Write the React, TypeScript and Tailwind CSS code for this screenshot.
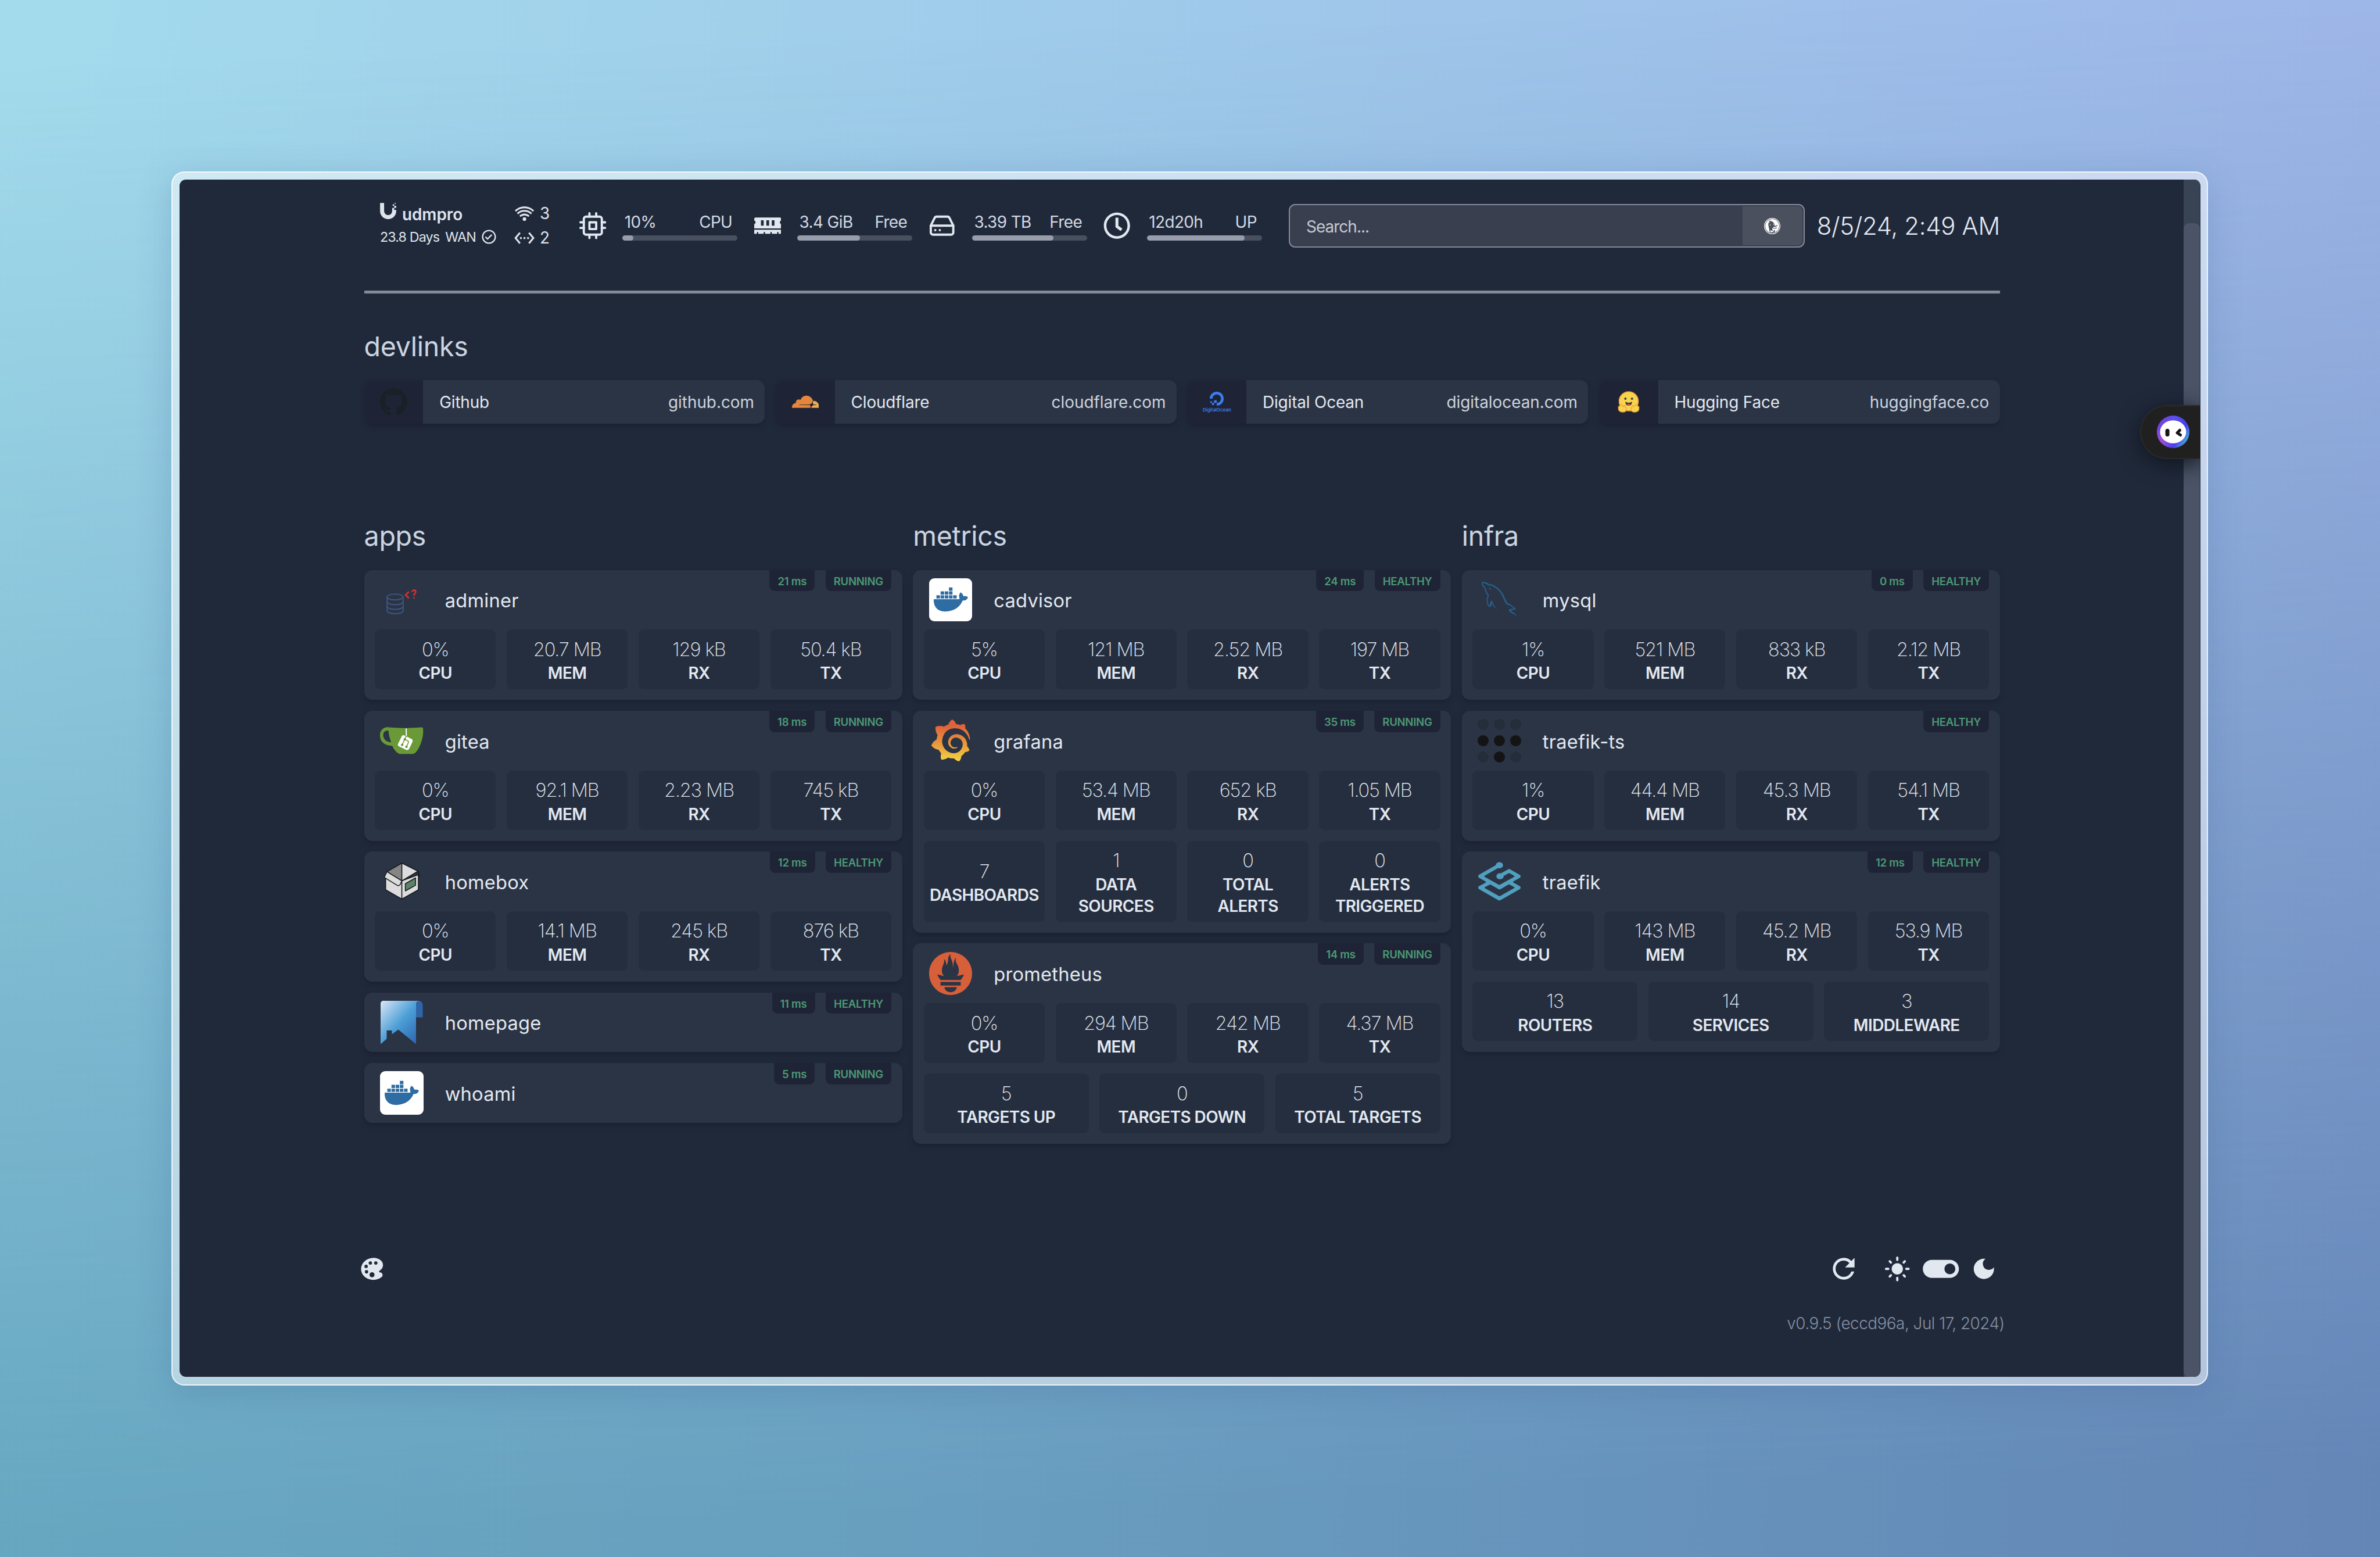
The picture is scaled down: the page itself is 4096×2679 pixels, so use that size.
import type { ReactNode } from "react";
import { FiCpu, FiHardDrive } from "react-icons/fi";
import { FaDocker, FaMemory, FaRegClock } from "react-icons/fa";
import { BiCheckCircle, BiWifi } from "react-icons/bi";
import { GrMysql } from "react-icons/gr";
import { IoColorPalette } from "react-icons/io5";
import { MdDarkMode, MdLightMode, MdRefresh, MdSettingsEthernet, MdToggleOn } from "react-icons/md";
import {
  SiCloudflare,
  SiDigitalocean,
  SiDuckduckgo,
  SiGitea,
  SiGithub,
  SiGrafana,
  SiPrometheus,
  SiTraefikproxy,
  SiUbiquiti,
} from "react-icons/si";

type Stat = [value: string, label: string];
type Service = { name: string; icon: ReactNode; ping?: string; status: string; rows: Stat[][] };

/* ---------- logos ---------- */

function AdminerLogo() {
  return (
    <svg viewBox="0 0 74.5 74.5" className="size-full" fill="none" strokeLinecap="round">
      <g stroke="#3e5580" strokeWidth="2">
        <ellipse cx="26" cy="32.2" rx="13.8" ry="5" />
        <path d="M12.2 32.2v23.6c0 2.9 6 5.2 13.8 5.2s13.8-2.3 13.8-5.2V32.2" />
        <path d="M12.2 40.5c0 2.8 6 5 13.8 5s13.8-2.2 13.8-5M12.2 48.5c0 2.8 6 5 13.8 5s13.8-2.2 13.8-5" />
      </g>
      <g stroke="#d92f2b" strokeWidth="2.6">
        <path d="M49 23.8l-5 4.9 5 5" />
        <path d="M55.5 22.3c.8-2.4 6-2.4 6 1 0 2.7-3 2.7-3 6M58.500 33.800v.2" />
      </g>
    </svg>
  );
}

function GiteaLogo() {
  return (
    <svg viewBox="0 0 24 24" className="size-full">
      <circle cx="13.7" cy="12.9" r="4.6" fill="#fff" />
      <rect x="12.6" y="5.2" width="2.4" height="5" fill="#fff" />
      <SiGitea size={24} color="#6a9a38" />
    </svg>
  );
}

function HomeboxLogo() {
  return (
    <svg viewBox="0 0 74.5 74.5" className="size-full" stroke="#16181c" strokeWidth="1.5" strokeLinejoin="round">
      <path d="M9.7 26v26l27.9 15.8V36.6z" fill="#dcdcdc" />
      <path d="M66 26v26L37.6 67.8V36.6z" fill="#dcdcdc" />
      <path d="M37.6 6L12 20.8l25.6 15.8z" fill="#858585" />
      <path d="M37.6 6l27.8 14L37.6 36.6z" fill="#dcdcdc" />
      <path d="M12 20.8L7.3 30.7l22 13.5c2 1.200 4 .8 5.200-1l3.100-6.600z" fill="#dcdcdc" />
      <path d="M65.4 20l2.6 8.500-2 1.500" fill="none" />
      <path d="M43.6 41.5l17.600-10v12.600L43.600 54z" fill="#5c8268" />
    </svg>
  );
}

function HomepageLogo() {
  return (
    <svg viewBox="0 0 74.5 74.5" className="size-full">
      <defs>
        <linearGradient id="ribbon" x1="0" y1="0" x2="1" y2="1">
          <stop offset="0" stopColor="#dbe6f7" />
          <stop offset=".5" stopColor="#4c9fd6" />
          <stop offset="1" stopColor="#2a5fae" />
        </linearGradient>
      </defs>
      <path d="M66 0c4.500 0 7.500 3 7.500 8v20.500H62V6z" fill="#2f66a8" />
      <path d="M6 0h62c-4 .5-6 3-6 8v66.500L31.500 49.400l-10.900 8.200V51h-9.100v14.600L1 74.500V5c0-3 2-5 5-5z" fill="url(#ribbon)" />
    </svg>
  );
}

function DockerLogo() {
  return (
    <div className="flex size-full items-center justify-center rounded-[9px] bg-white">
      <FaDocker size={59} color="#2e6ca4" />
    </div>
  );
}

function GrafanaLogo() {
  return (
    <>
      <svg className="absolute size-0">
        <defs>
          <linearGradient id="flame" x1="0" y1="0" x2="0" y2="1">
            <stop offset=".15" stopColor="#e0623a" />
            <stop offset=".6" stopColor="#e89a3c" />
            <stop offset="1" stopColor="#f4d443" />
          </linearGradient>
        </defs>
      </svg>
      <SiGrafana size={72} fill="url(#flame)" />
    </>
  );
}

function CloudflareLogo() {
  return (
    <>
      <svg className="absolute size-0">
        <defs>
          <linearGradient id="cloud" x1="0" y1="0" x2="1" y2="0">
            <stop offset=".72" stopColor="#e5863c" />
            <stop offset=".76" stopColor="#ecac52" />
          </linearGradient>
        </defs>
      </svg>
      <SiCloudflare size={46.5} fill="url(#cloud)" />
    </>
  );
}

function TailscaleLogo() {
  const dots = [0, 0, 0, 1, 1, 1, 0, 1, 0];
  return (
    <div className="grid size-full grid-cols-3 content-between justify-items-center gap-x-[9px]">
      {dots.map((on, i) => (
        <span key={i} className={on ? "size-[19px] rounded-full bg-[#141415]" : "size-[19px] rounded-full bg-[#252d3b]"} />
      ))}
    </div>
  );
}

function DigitalOceanLogo() {
  return (
    <div className="flex flex-col items-center gap-[3px] text-[#3b7cf0]">
      <SiDigitalocean size={24} />
      <span className="text-[8px] leading-[9px] font-semibold tracking-[-0.1px]">DigitalOcean</span>
    </div>
  );
}

function HuggingFaceLogo() {
  return (
    <svg viewBox="0 0 40 37" width="40" height="37">
      <circle cx="20" cy="17.5" r="16.5" fill="#f8d44c" stroke="#f0a23a" strokeWidth="1.5" />
      <circle cx="14.3" cy="13" r="2" fill="#3a3b45" />
      <circle cx="25.7" cy="13" r="2" fill="#3a3b45" />
      <path d="M14.500 18c3.500 2.500 7.500 2.500 11 0 .5 4.500-2 7-5.500 7s-6-2.500-5.500-7z" fill="#3a3b45" />
      <path d="M17 23.300c1.500-1.600 4.500-1.600 6 0-1.600 2-4.400 2-6 0z" fill="#ef4e4e" />
      <path
        d="M2.500 29c-1-2.500 1-4 2.500-2.500-1-3 1.500-5 3.500-2.500l2.500 3c.5-3 3.500-2.500 3.300.5 2.700 2.500 3 8.500-4.300 8.500-4.500 0-8.500-2.500-7.500-7z"
        fill="#f8d44c"
        stroke="#f0a23a"
        strokeWidth="1.3"
      />
      <path
        d="M37.500 29c1-2.500-1-4-2.500-2.500 1-3-1.500-5-3.500-2.500l-2.500 3c-.5-3-3.500-2.500-3.300.5-2.700 2.500-3 8.500 4.300 8.500 4.500 0 8.500-2.500 7.500-7z"
        fill="#f8d44c"
        stroke="#f0a23a"
        strokeWidth="1.3"
      />
    </svg>
  );
}

/* ---------- data ---------- */

const resources = [
  { icon: <FiCpu size={46.5} />, value: "10%", label: "CPU", used: 9.4 },
  { icon: <FaMemory size={46.5} />, value: "3.4 GiB", label: "Free", used: 54.6 },
  { icon: <FiHardDrive size={46.5} />, value: "3.39 TB", label: "Free", used: 70.6 },
  { icon: <FaRegClock size={46.5} />, value: "12d20h", label: "UP", used: 85 },
];

const links = [
  { icon: <SiGithub size={46.5} color="#1b1f26" />, name: "Github", host: "github.com" },
  { icon: <CloudflareLogo />, name: "Cloudflare", host: "cloudflare.com" },
  { icon: <DigitalOceanLogo />, name: "Digital Ocean", host: "digitalocean.com" },
  { icon: <HuggingFaceLogo />, name: "Hugging Face", host: "huggingface.co" },
];

const usage = (cpu: string, mem: string, rx: string, tx: string): Stat[] => [
  [cpu, "CPU"],
  [mem, "MEM"],
  [rx, "RX"],
  [tx, "TX"],
];

const groups: { title: string; services: Service[] }[] = [
  {
    title: "apps",
    services: [
      { name: "adminer", icon: <AdminerLogo />, ping: "21 ms", status: "RUNNING", rows: [usage("0%", "20.7 MB", "129 kB", "50.4 kB")] },
      { name: "gitea", icon: <GiteaLogo />, ping: "18 ms", status: "RUNNING", rows: [usage("0%", "92.1 MB", "2.23 MB", "745 kB")] },
      { name: "homebox", icon: <HomeboxLogo />, ping: "12 ms", status: "HEALTHY", rows: [usage("0%", "14.1 MB", "245 kB", "876 kB")] },
      { name: "homepage", icon: <HomepageLogo />, ping: "11 ms", status: "HEALTHY", rows: [] },
      { name: "whoami", icon: <DockerLogo />, ping: "5 ms", status: "RUNNING", rows: [] },
    ],
  },
  {
    title: "metrics",
    services: [
      { name: "cadvisor", icon: <DockerLogo />, ping: "24 ms", status: "HEALTHY", rows: [usage("5%", "121 MB", "2.52 MB", "197 MB")] },
      {
        name: "grafana",
        icon: <GrafanaLogo />,
        ping: "35 ms",
        status: "RUNNING",
        rows: [
          usage("0%", "53.4 MB", "652 kB", "1.05 MB"),
          [
            ["7", "DASHBOARDS"],
            ["1", "DATA SOURCES"],
            ["0", "TOTAL ALERTS"],
            ["0", "ALERTS TRIGGERED"],
          ],
        ],
      },
      {
        name: "prometheus",
        icon: <SiPrometheus size={74} color="#d75f3a" />,
        ping: "14 ms",
        status: "RUNNING",
        rows: [
          usage("0%", "294 MB", "242 MB", "4.37 MB"),
          [
            ["5", "TARGETS UP"],
            ["0", "TARGETS DOWN"],
            ["5", "TOTAL TARGETS"],
          ],
        ],
      },
    ],
  },
  {
    title: "infra",
    services: [
      { name: "mysql", icon: <GrMysql size={61} color="#25618d" />, ping: "0 ms", status: "HEALTHY", rows: [usage("1%", "521 MB", "833 kB", "2.12 MB")] },
      { name: "traefik-ts", icon: <TailscaleLogo />, status: "HEALTHY", rows: [usage("1%", "44.4 MB", "45.3 MB", "54.1 MB")] },
      {
        name: "traefik",
        icon: <SiTraefikproxy size={73} color="#519fbf" />,
        ping: "12 ms",
        status: "HEALTHY",
        rows: [
          usage("0%", "143 MB", "45.2 MB", "53.9 MB"),
          [
            ["13", "ROUTERS"],
            ["14", "SERVICES"],
            ["3", "MIDDLEWARE"],
          ],
        ],
      },
    ],
  },
];

/* ---------- pieces ---------- */

function UnifiWidget() {
  return (
    <div className="ml-[27.3px] flex w-[342.8px] shrink-0 text-[#dfe4ec]">
      <div className="flex w-[230.4px] flex-col gap-[3px]">
        <div className="flex h-[37.2px]">
          <SiUbiquiti size={28} />
          <span className="pl-[10px] text-[27.9px] leading-[40px] font-semibold">udmpro</span>
        </div>
        <div className="flex h-[37.2px] items-center text-[23.3px] leading-[37.2px] tracking-[-0.037em]">
          <span>23.8 Days</span>
          <span className="pl-[10px]">WAN</span>
          <BiCheckCircle size={29} className="ml-[8px]" />
        </div>
      </div>
      <div className="flex flex-col gap-[5px] text-[27.9px] leading-[38.5px]">
        <div className="flex h-[37.2px] items-center gap-[7.5px]">
          <BiWifi size={37.2} />
          <span>3</span>
        </div>
        <div className="flex h-[37.2px] items-center gap-[7.5px]">
          <MdSettingsEthernet size={37.2} />
          <span>2</span>
        </div>
      </div>
    </div>
  );
}

function Resource({ icon, value, label, used }: (typeof resources)[number]) {
  return (
    <div className="flex w-[300.9px] shrink-0 items-center gap-[28px] text-[#e2e8f0]">
      {icon}
      <div className="w-[198.1px]">
        <div className="flex h-[37.2px] justify-between pr-[9px] pl-[3.5px] text-[27.9px] leading-[39.6px] tracking-[-0.022em] text-[#d3d9e3]">
          <span>{value}</span>
          <span>{label}</span>
        </div>
        <div className="mt-[4.7px] h-[9.3px] w-full overflow-hidden rounded-full bg-[#485060]">
          <div className="h-full rounded-full bg-[#989dab]" style={{ width: `${used}%` }} />
        </div>
      </div>
    </div>
  );
}

function SearchBox() {
  return (
    <div className="ml-[17.8px] flex h-[74.8px] w-[887.6px] shrink-0 justify-between rounded-[11px] border-[2.4px] border-[#858a99] bg-[#3a3f4f] p-[2px]">
      <span className="pl-[26px] text-[27.9px] leading-[70px] tracking-[-0.034em] text-[#c5c9d3]">Search...</span>
      <div className="flex w-[103px] items-center justify-center rounded-r-[8px] bg-[#4b505e] text-white">
        <SiDuckduckgo size={28} />
      </div>
    </div>
  );
}

function LinkCard({ icon, name, host }: (typeof links)[number]) {
  return (
    <div className="flex h-[74.5px] overflow-hidden rounded-[14px] bg-[#2b3445] text-[27.9px] leading-[76.5px] shadow-[0_5px_9px_#1b2132]">
      <div className="flex w-[101.6px] shrink-0 items-center justify-center bg-[#1e2435]">{icon}</div>
      <div className="flex grow justify-between pr-[18.5px] pl-[28px]">
        <span className="tracking-[-0.006em] text-[#e2e8f0]">{name}</span>
        <span className="tracking-[-0.001em] text-[#cbd3de]">{host}</span>
      </div>
    </div>
  );
}

function Badge({ children }: { children: ReactNode }) {
  return (
    <span className="h-[36.6px] rounded-b-[9px] bg-[#1e2435] px-[14px] text-[18.6px] leading-[38px] font-semibold tracking-[-0.015em] text-[#4c9975]">
      {children}
    </span>
  );
}

function StatBlock({ stat: [value, label] }: { stat: Stat }) {
  return (
    <div className="flex flex-1 flex-col items-center justify-center rounded-[9px] bg-[#252e3f] px-[9.3px] pt-[10.5px] pb-[8.2px] text-center text-[#e2e8f0]">
      <div className="text-[32.6px] leading-[46.5px] font-extralight tracking-[-0.035em]">{value}</div>
      <div className="text-[27.9px] leading-[37.2px] font-semibold tracking-[-0.02em]">{label}</div>
    </div>
  );
}

function ServiceCard({ name, icon, ping, status, rows }: Service) {
  return (
    <div className="relative rounded-[14px] bg-[#2b3445] shadow-[0_5px_9px_#1b2132]">
      <div className="absolute top-0 right-[18.6px] flex gap-[18.6px]">
        {ping && <Badge>{ping}</Badge>}
        <Badge>{status}</Badge>
      </div>
      <div className="flex h-[102.7px] items-center">
        <div className="ml-[27.6px] flex size-[74.5px] items-center justify-center">{icon}</div>
        <span className="pt-[3px] pl-[37px] text-[32.6px] leading-[46.5px] tracking-[0.008em] text-[#e2e8f0]">{name}</span>
      </div>
      {rows.map((row, i) => (
        <div key={i} className="flex gap-[18.6px] px-[18.6px] pb-[18.6px]">
          {row.map((s) => (
            <StatBlock key={s[1]} stat={s} />
          ))}
        </div>
      ))}
    </div>
  );
}

function Heading({ children }: { children: ReactNode }) {
  return <h2 className="h-[65.1px] text-[46.5px] leading-[68px] tracking-[-0.006em] text-[#cbd5e1]">{children}</h2>;
}

function Assistant() {
  return (
    <div className="absolute top-[388.2px] right-0 flex h-[93.2px] w-[104.5px] items-center rounded-l-full border-y-[2px] border-l-[2px] border-[#2a2a2a] bg-[#202020] pl-[27.6px] shadow-[0_8px_36px_#111520]">
      <svg viewBox="0 0 56 56" className="size-[56px]">
        <defs>
          <linearGradient id="ring" x1="0" y1=".2" x2="1" y2=".8">
            <stop offset="0" stopColor="#7a3fe0" />
            <stop offset=".35" stopColor="#5a50ea" />
            <stop offset=".7" stopColor="#4a3cf0" />
            <stop offset="1" stopColor="#4cc3cf" />
          </linearGradient>
          <radialGradient id="glow" cx=".15" cy=".75" r=".4">
            <stop offset="0" stopColor="#a44bd6" />
            <stop offset="1" stopColor="#a44bd6" stopOpacity="0" />
          </radialGradient>
        </defs>
        <circle cx="28" cy="28" r="28" fill="url(#ring)" />
        <circle cx="28" cy="28" r="28" fill="url(#glow)" />
        <ellipse cx="28" cy="28" rx="22.5" ry="19.8" fill="#fff" />
        <rect x="14.6" y="22.7" width="7" height="13.4" rx="3.5" fill="#161616" />
        <path d="M39.500 25.200l-4.500 4.500 5.500 3.800" fill="none" stroke="#161616" strokeWidth="5" strokeLinecap="round" strokeLinejoin="round" />
      </svg>
    </div>
  );
}

export default function App() {
  return (
    <div className="relative h-[2679px] w-[4096px] overflow-hidden bg-[linear-gradient(100deg,#a3dbec_0%,#9fc8ea_48%,#9fb3e9_100%)] pt-[295.4px] pl-[295.4px] font-['Inter',sans-serif]">
      <div className="absolute inset-0 bg-[linear-gradient(95deg,#66a8c0_0%,#689fbf_40%,#6486b7_100%)] [mask-image:linear-gradient(178deg,transparent_4%,black_94%)]" />
      <div className="relative h-[2088.2px] w-[3505px] rounded-[22px] border-[2.4px] border-white/75 bg-white/50 p-[11.3px] shadow-[0_12px_56px_rgba(60,100,150,0.26)]">
        <div className="relative flex h-[2060.8px] overflow-hidden rounded-[11px] bg-[#20293a]">
          <main className="w-[3449.7px] shrink-0 pt-[33.4px] pl-[317.9px]">
            <div className="w-[2815.2px]">
              <header className="flex h-[93px] items-center">
                <UnifiWidget />
                {resources.map((r) => (
                  <Resource key={r.value} {...r} />
                ))}
                <SearchBox />
                <div className="ml-auto text-[41.9px] leading-[58px] font-light tracking-[-0.008em] whitespace-nowrap text-[#e2e8f0]">
                  8/5/24, 2:49 AM
                </div>
              </header>
              <div className="mt-[65px] h-[4.7px] bg-[#848a98]" />

              <section className="mt-[57px]">
                <Heading>devlinks</Heading>
                <div className="mt-[27.5px] grid grid-cols-4 gap-[18.6px]">
                  {links.map((l) => (
                    <LinkCard key={l.name} {...l} />
                  ))}
                </div>
              </section>

              <div className="mt-[159px] grid h-[1080.9px] grid-cols-3 items-start gap-[18.6px]">
                {groups.map((g) => (
                  <section key={g.title}>
                    <Heading>{g.title}</Heading>
                    <div className="mt-[27.6px] flex flex-col gap-[18.7px]">
                      {g.services.map((s) => (
                        <ServiceCard key={s.name} {...s} />
                      ))}
                    </div>
                  </section>
                ))}
              </div>

              <footer className="-mr-[8px] -ml-[10px] mt-[177.3px]">
                <div className="flex h-[74.5px] items-center justify-between text-[#e2e8f0]">
                  <IoColorPalette size={46.5} />
                  <div className="flex items-center pr-[12px]">
                    <MdRefresh size={56} className="mr-[41px]" />
                    <MdLightMode size={46.5} />
                    <MdToggleOn size={74.5} className="mx-[14px]" />
                    <MdDarkMode size={46.5} />
                  </div>
                </div>
                <div className="mt-[38.6px] text-right text-[27.9px] leading-[37.2px] font-light tracking-[-0.018em] text-[#8490a3]">
                  v0.9.5 (eccd96a, Jul 17, 2024)
                </div>
              </footer>
            </div>
          </main>
          <div className="w-[28px] bg-[#384354] pt-[75.7px]">
            <div className="h-full rounded-[9px] bg-[#4a5466]" />
          </div>
          <Assistant />
        </div>
      </div>
    </div>
  );
}
